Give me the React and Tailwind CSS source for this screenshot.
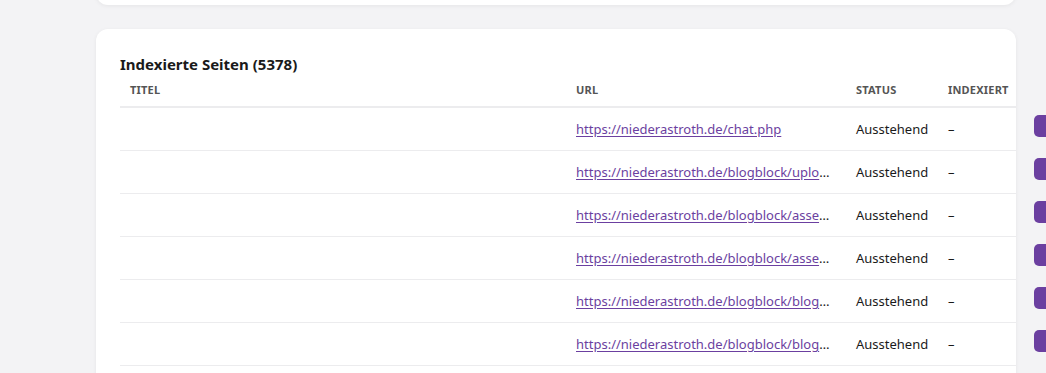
import React from "react";

const rows = [
  { url: "https://niederastroth.de/chat.php" },
  { url: "https://niederastroth.de/blogblock/uploads/2023/image.png" },
  { url: "https://niederastroth.de/blogblock/assets/css/style.css" },
  { url: "https://niederastroth.de/blogblock/assets/js/main.js" },
  { url: "https://niederastroth.de/blogblock/blogpost-1" },
  { url: "https://niederastroth.de/blogblock/blogpost-2" },
  { url: "https://niederastroth.de/blogblock/blogpost-3" },
];

export default function App() {
  return (
    <div
      className="w-[1046px] h-[373px] overflow-hidden bg-[#f3f3f5]"
      style={{ fontFamily: '"Noto Sans", "Open Sans", sans-serif' }}
    >
      <div className="ml-[96px] w-[920px]">
        <div className="-mt-[40px] h-[45px] rounded-xl bg-white shadow-[0_1px_4px_rgba(0,0,0,0.06)]" />
        <div className="mt-[24px] rounded-xl bg-white px-[24px] pt-[24px] pb-4 shadow-[0_1px_4px_rgba(0,0,0,0.06)]">
          <h2 className="text-[15px] leading-[22px] font-bold text-[#1a1a1a]">
            Indexierte Seiten (5378)
          </h2>
          <div className="w-[896px]">
            <div className="flex h-[33px] items-center border-b-2 border-[#ececee] text-[11px] font-bold uppercase text-[#555] tracking-[0.2px]">
              <div className="w-[446px] shrink-0 px-[10px]">Titel</div>
              <div className="w-[280px] shrink-0 px-[10px]">URL</div>
              <div className="w-[92px] shrink-0 px-[10px]">Status</div>
              <div className="w-[86px] shrink-0 px-[10px]">Indexiert</div>
            </div>
            {rows.map((r, i) => (
              <div
                key={i}
                className="flex h-[43px] items-center border-b border-[#ececee] pt-[2px] text-[13px] text-[#1a1a1a]"
              >
                <div className="w-[446px] shrink-0 px-[10px]" />
                <div className="w-[280px] shrink-0 pl-[10px] pr-[13px] truncate">
                  <a href="#" className="text-[#6b3fa0] underline underline-offset-2">
                    {r.url}
                  </a>
                </div>
                <div className="w-[92px] shrink-0 px-[10px]">Ausstehend</div>
                <div className="w-[86px] shrink-0 px-[10px]">–</div>
                <div className="w-[60px] shrink-0 px-[10px] -mt-[2px]">
                  <button className="h-[22px] w-[40px] rounded-[5px] bg-[#6b3fa0]" />
                </div>
              </div>
            ))}
          </div>
        </div>
      </div>
    </div>
  );
}
